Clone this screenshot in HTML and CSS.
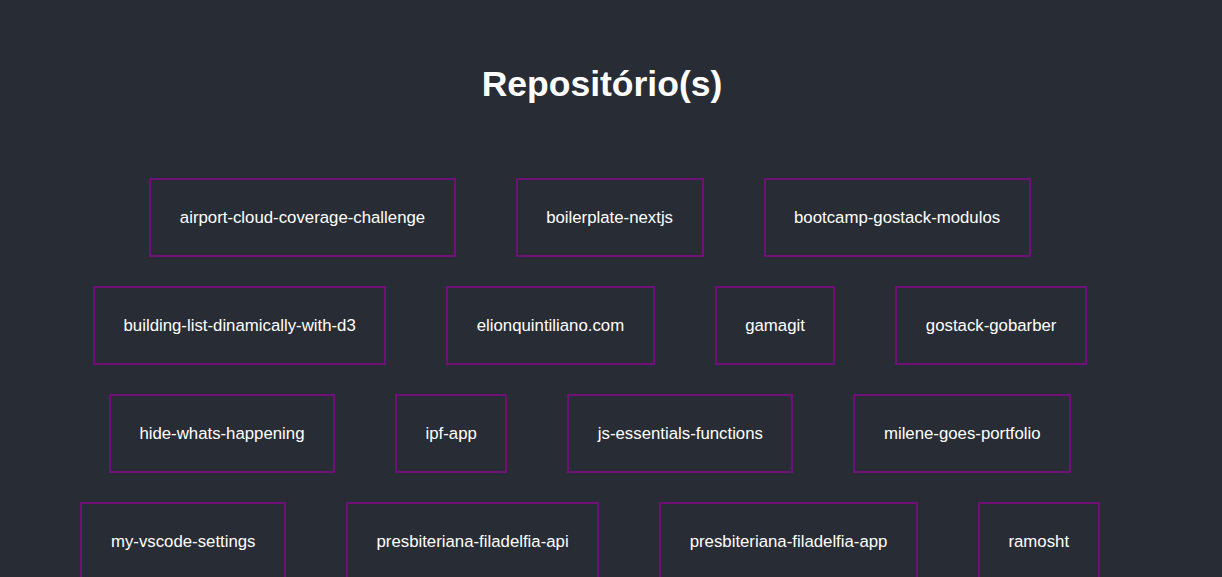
FILE: index.html
```html
<!DOCTYPE html>
<html lang="pt-BR">
<head>
<meta charset="utf-8">
<title>Repositório(s)</title>
<link rel="stylesheet" href="styles.css">
</head>
<body>
<main class="page">
  <h1 class="title">Repositório(s)</h1>
  <ul class="repos">
    <li class="repo">airport-cloud-coverage-challenge</li>
    <li class="repo">boilerplate-nextjs</li>
    <li class="repo">bootcamp-gostack-modulos</li>
    <li class="repo">building-list-dinamically-with-d3</li>
    <li class="repo">elionquintiliano.com</li>
    <li class="repo">gamagit</li>
    <li class="repo">gostack-gobarber</li>
    <li class="repo">hide-whats-happening</li>
    <li class="repo">ipf-app</li>
    <li class="repo">js-essentials-functions</li>
    <li class="repo">milene-goes-portfolio</li>
    <li class="repo">my-vscode-settings</li>
    <li class="repo">presbiteriana-filadelfia-api</li>
    <li class="repo">presbiteriana-filadelfia-app</li>
    <li class="repo">ramosht</li>
  </ul>
</main>
</body>
</html>
```

FILE: styles.css
```css
html, body {
  margin: 0;
  padding: 0;
  background: #282c34;
}

body {
  font-family: "Liberation Sans", Arial, sans-serif;
  color: #ffffff;
  overflow: hidden;
}

.page {
  width: 1180px;
  padding-top: 64px;
}

.title {
  margin: 0 0 0 24px;
  font-size: 35.5px;
  font-weight: bold;
  line-height: 40px;
  text-align: center;
}

.repos {
  list-style: none;
  margin: 74px 30px 0 30px;
  padding: 0;
  display: flex;
  flex-wrap: wrap;
  justify-content: center;
  gap: 29px 60px;
}

.repo {
  padding: 28px 28.5px;
  border: 2px solid #6f0f78;
  font-size: 16.8px;
  line-height: 19px;
}
```
